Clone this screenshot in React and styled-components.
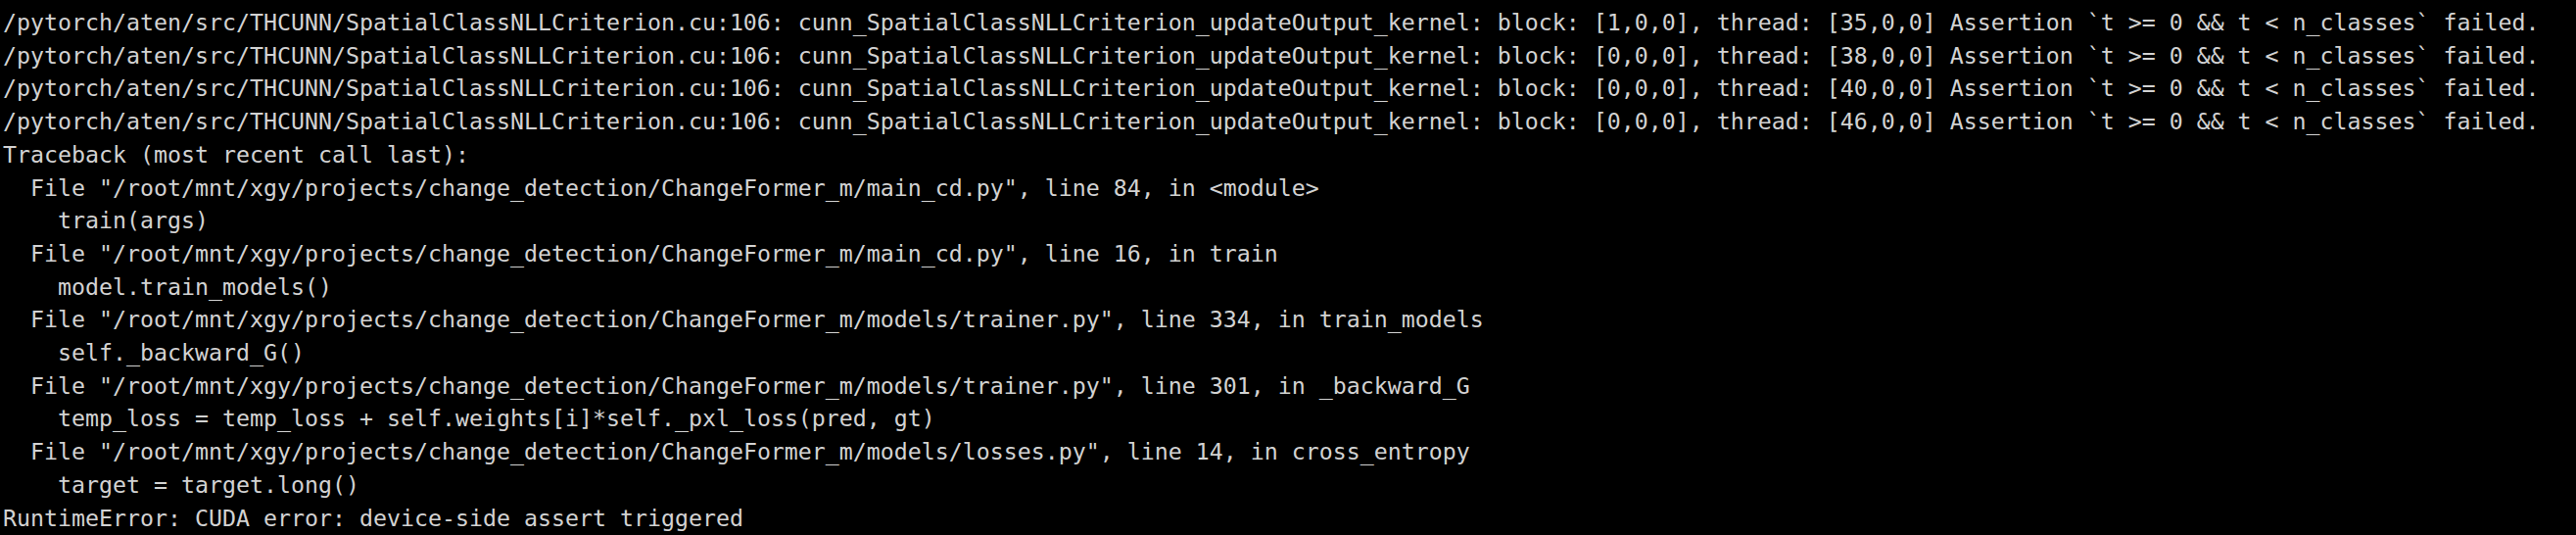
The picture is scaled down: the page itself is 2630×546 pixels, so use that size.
import React from "react";
import styled, { createGlobalStyle } from "styled-components";

const Global = createGlobalStyle`
  html, body {
    margin: 0;
    padding: 0;
    background: #000;
  }
`;

const Terminal = styled.div`
  width: 2630px;
  height: 546px;
  box-sizing: border-box;
  background: #000;
  padding: 6px 0 0 3px;
  overflow: hidden;
  display: flex;
  flex-direction: column;
  font-family: "DejaVu Sans Mono", "Liberation Mono", monospace;
  font-size: 23.25px;
  line-height: 33.7px;
  color: #d2d2d2;
`;

const Line = styled.div`
  white-space: pre;
  padding-left: ${(p) => (p.$indent || 0) * 14}px;
`;

const base = "/pytorch/aten/src/THCUNN/SpatialClassNLLCriterion.cu:106: cunn_SpatialClassNLLCriterion_updateOutput_kernel: block: ";
const asserts = [
  ["[1,0,0]", "[35,0,0]"],
  ["[0,0,0]", "[38,0,0]"],
  ["[0,0,0]", "[40,0,0]"],
  ["[0,0,0]", "[46,0,0]"],
];

const root = "/root/mnt/xgy/projects/change_detection/ChangeFormer_m";
const trace = [
  [1, `File "${root}/main_cd.py", line 84, in <module>`],
  [2, "train(args)"],
  [1, `File "${root}/main_cd.py", line 16, in train`],
  [2, "model.train_models()"],
  [1, `File "${root}/models/trainer.py", line 334, in train_models`],
  [2, "self._backward_G()"],
  [1, `File "${root}/models/trainer.py", line 301, in _backward_G`],
  [2, "temp_loss = temp_loss + self.weights[i]*self._pxl_loss(pred, gt)"],
  [1, `File "${root}/models/losses.py", line 14, in cross_entropy`],
  [2, "target = target.long()"],
];

export default function App() {
  return (
    <>
      <Global />
      <Terminal>
        {asserts.map(([b, t], i) => (
          <Line key={"a" + i}>
            {`${base}${b}, thread: ${t} Assertion \`t >= 0 && t < n_classes\` failed.`}
          </Line>
        ))}
        <Line>Traceback (most recent call last):</Line>
        {trace.map(([lvl, text], i) => (
          <Line key={"t" + i} $indent={lvl * 2}>
            {text}
          </Line>
        ))}
        <Line>RuntimeError: CUDA error: device-side assert triggered</Line>
      </Terminal>
    </>
  );
}
